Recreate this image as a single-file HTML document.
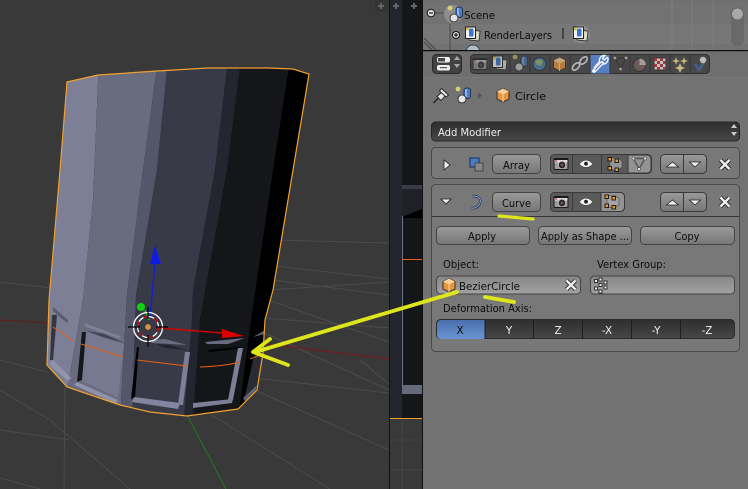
<!DOCTYPE html>
<html><head><meta charset="utf-8"><style>
html,body{margin:0;padding:0;background:#393939;width:748px;height:489px;overflow:hidden}
svg{display:block}
text{font-family:"DejaVu Sans","Liberation Sans",sans-serif;font-size:10.4px;fill:#0c0c0c}
</style></head><body>
<svg width="748" height="489" viewBox="0 0 748 489" xmlns="http://www.w3.org/2000/svg">
<defs>
<linearGradient id="btn" x1="0" y1="0" x2="0" y2="1"><stop offset="0" stop-color="#9a9a9a"/><stop offset="1" stop-color="#767676"/></linearGradient>
<linearGradient id="field" x1="0" y1="0" x2="0" y2="1"><stop offset="0" stop-color="#868686"/><stop offset="1" stop-color="#a2a2a2"/></linearGradient>
<linearGradient id="drk" x1="0" y1="0" x2="0" y2="1"><stop offset="0" stop-color="#2e2e2e"/><stop offset="1" stop-color="#474747"/></linearGradient>
<linearGradient id="blue" x1="0" y1="0" x2="0" y2="1"><stop offset="0" stop-color="#4a70ac"/><stop offset="1" stop-color="#6a94d4"/></linearGradient>
<clipPath id="mesh"><path d="M67,82 L98,75 L157,71 L208,68 L268,68 L293,69 L309,74 L273,290 L265,320 L263,353 L257,390 L238,409 L187,416 L150,412 L120,405 L67,387 L47,365 L49,300 L60,170 Z"/></clipPath>
<g id="cube"><path d="M0,-6.500 L6,-3.500 V4 L0,7 L-6,4 V-3.500 Z" fill="#e8963c" stroke="#3a3026" stroke-width="1"/><path d="M-6,-3.500 L0,-.5 L6,-3.500 L0,-6.500 Z" fill="#f8cf98"/><path d="M0,-.5 V7" stroke="#f8d8a8" stroke-width="1"/></g>
<g id="scene"><rect x="1" y="-7" width="6.500" height="10.500" rx="2.500" fill="#4a7cc8" stroke="#16243c" stroke-width=".8"/><rect x="2" y="-6" width="2" height="8" fill="#8fb4e8"/><circle cx="-1" cy="4" r="4" fill="#e4e4e4" stroke="#222" stroke-width=".8"/><circle cx="-5" cy="-6" r="2.400" fill="#d8d070"/></g>
<g id="layers"><path d="M-2,-4 L8,-3 L7,7 L-3,6 Z" fill="#d8d8c4" stroke="#333" stroke-width=".9"/><rect x="-6.500" y="-7" width="10" height="11.500" fill="#f2f2f2" stroke="#222"/><rect x="-3" y="-5.500" width="4.500" height="8" rx="1" fill="#3c74c8"/><circle cx="-4.500" cy="-5" r="1.500" fill="#d8c040"/></g>
<g id="cam"><rect x="-7.500" y="-6" width="15" height="12" rx="1" fill="#1a1a1a"/><rect x="-6.500" y="-4" width="13" height="9" fill="#d8d8d8"/><rect x="-6.500" y="-1.500" width="13" height="6.500" fill="#9a9a9a"/><circle cx="1" cy="1" r="3.800" fill="#2a2a2a" stroke="#ddd" stroke-width=".7"/><circle cx="1" cy="1" r="1.400" fill="#7a5050"/><circle cx="-5" cy="-3" r=".9" fill="#e03030"/></g>
<g id="eye"><path d="M-6.500,0 C-3,-5 3,-5 6.500,0 C3,4.500 -3,4.500 -6.500,0 Z" fill="#f4f4f4" stroke="#333" stroke-width=".5"/><circle cx="0" cy="-.3" r="1.900" fill="#222"/></g>
<g id="edit"><path d="M-5,-6 L3,-6 L7,-3 L7,3 L2,7 L-5,5 Z" fill="#a8a8a8" opacity=".75"/><path d="M-5,-6 L3,-6 L7,-3 L7,3 L2,7 L-5,5 Z" fill="none" stroke="#444" stroke-width=".6"/><g fill="#e89a28" stroke="#111" stroke-width=".9"><rect x="-7" y="-6.500" width="3.500" height="3.500"/><rect x="0" y="-5" width="3.500" height="3.500"/><rect x="-7" y="2.500" width="3.500" height="3.500"/><rect x="0" y="4" width="3.500" height="3.500"/></g></g>
<g id="vmesh"><path d="M-5.500,-4.500 H6 L0,6 Z" fill="none" stroke="#555" stroke-width="1.400"/><g fill="#e4e4e4" stroke="#333" stroke-width=".5"><circle cx="-5.500" cy="-4.500" r="1.500"/><circle cx="6" cy="-4.500" r="1.500"/><circle cx="0" cy="6" r="1.500"/></g></g>
<g id="xic"><path d="M-4.500,-4.500 L4.500,4.500 M4.500,-4.500 L-4.500,4.500" stroke="#222" stroke-width="4.200"/><path d="M-4.500,-4.500 L4.500,4.500 M4.500,-4.500 L-4.500,4.500" stroke="#f0f0f0" stroke-width="2.400"/></g>
<g id="updown"><rect x="0" y="0" width="46" height="19" rx="4" fill="url(#btn)" stroke="#3a3a3a"/><path d="M23,0 V19" stroke="#3a3a3a"/><path d="M6,12.500 L12,7.500 L18,12.500 Z" fill="#f0f0f0" stroke="#222" stroke-width=".8"/><path d="M29,7.500 H40 L34.500,12.500 Z" fill="#f0f0f0" stroke="#222" stroke-width=".8"/></g>
</defs>

<!-- viewport -->
<rect width="390" height="489" fill="#393939"/>
<g stroke="#4b4b4b" stroke-width="1" fill="none">
<path d="M0,282 L60,289"/><path d="M0,390 L50,420 L130,489"/>
<path d="M0,430 L70,440"/><path d="M65,385 L64,489"/><path d="M0,478 L40,489"/>
<path d="M262,332 L389,390"/><path d="M268,300 L389,342"/><path d="M264,318 L389,328"/>
<path d="M274,240 L389,243"/><path d="M268,290 L389,282"/><path d="M255,390 L389,450"/><path d="M255,378 L389,393"/>
<path d="M275,266 L389,279"/><path d="M272,280 L389,295"/><path d="M360,360 L389,384"/><path d="M212,415 L330,489"/>
<path d="M0,360 L47,372"/>
</g>
<path d="M0,320 L50,323" stroke="#6b1a1a"/>
<path d="M258,343 L389,359" stroke="#7a1818"/>
<path d="M187,415 L226,489" stroke="#1f7a1f"/>

<!-- right strip of viewport -->
<rect x="389" width="1" height="489" fill="#111"/>
<rect x="390" width="12" height="418" fill="#23262c"/>
<rect x="402" width="20" height="418" fill="#15161a"/>
<rect x="402" y="185" width="20" height="32" fill="#202126"/>
<path d="M402,217 L422,209 V218 H402 Z" fill="#000"/>
<rect x="402" y="185" width="20" height="4" fill="#3a3d48"/>
<rect x="402" y="216" width="1" height="169" fill="#6f7280"/>
<rect x="402" y="385" width="20" height="9" fill="#666a7c"/>
<rect x="402" y="259" width="20" height="1" fill="#e85f10"/>
<rect x="390" y="418" width="32" height="1" fill="#f0a030"/>
<path d="M390,440 H422 M402,419 V489 M390,470 H422" stroke="#444"/>
<rect x="422" width="1" height="489" fill="#111"/>
<rect x="375" width="14" height="12" fill="#343434"/>
<g stroke="#666" stroke-width="2"><path d="M378,6 H384 M381,3 V9"/><path d="M393,6 H399 M396,3 V9"/><path d="M411,6 H417 M414,3 V9"/></g>

<!-- mesh -->
<g clip-path="url(#mesh)">
<rect x="40" y="60" width="280" height="360" fill="#000"/>
<path d="M40,60 H99 L93,200 L83,300 L68,385 L60,420 H40 Z" fill="#7c7f96"/>
<path d="M99,60 H158 L143,170 L127,295 L120,420 H60 L68,385 L83,300 L93,200 Z" fill="#696c7f"/>
<path d="M158,60 H168 L157,170 L136,295 L132,420 H120 L127,295 L143,170 Z" fill="#54576a"/>
<path d="M168,60 H228 L215,170 L193,290 L192,320 L184,420 H132 L136,295 L157,170 Z" fill="#383b47"/>
<path d="M228,60 H241 L227,170 L200,320 L193,420 H184 L192,320 L193,290 L215,170 Z" fill="#23262e"/>
<path d="M241,60 H290 L273,170 L251,320 L238,420 H193 L200,320 L227,170 Z" fill="#15161a"/>
<!-- left window -->
<path d="M53,307 L68,320 L67,323 L53,311 Z" fill="#5a5d70"/>
<path d="M52,315 L57,315 L53,360 L50,360 Z" fill="#34363f"/>
<path d="M53,360 L71,378 L68,381 L49,364 Z" fill="#9295aa"/>
<!-- window 2 -->
<path d="M84,323 L120,336 L121,339 L86,327 Z" fill="#7f8296"/>
<path d="M87,331 L104,334 L124,343 L103,337 Z" fill="#3f4150"/>
<path d="M86,332 L124,344 L118,398 L82,381 Z" fill="#767990"/>
<path d="M82,332 L86,332 L82,380 L77,382 Z" fill="#16171c"/>
<path d="M77,382 L118,400 L116,404 L74,385 Z" fill="#8f92a8"/>
<!-- window 3 -->
<path d="M137,347 L139,347 L135,397 L131,399 Z" fill="#000"/>
<path d="M134,397 L180,403 L178,409 L132,402 Z" fill="#8285a0"/>
<path d="M185,352 L190,352 L183,405 L178,405 Z" fill="#7c7f96"/>
<path d="M152,340 L165,339 L187,345 L170,344 L152,343 Z" fill="#696c80"/>
<path d="M156,344 L170,345 L187,350 L165,348 Z" fill="#22242c"/>
<!-- window 4 -->
<path d="M205,342 L245,338 L228,344 L207,344 Z" fill="#696c80"/>
<path d="M207,350 L240,347 L243,348 L210,352 Z" fill="#000"/>
<path d="M238,348 L243,348 L233,400 L228,400 Z" fill="#7c7f96"/>
<path d="M193,403 L233,399 L232,403 L193,408 Z" fill="#7c7f96"/>
<!-- right -->
<path d="M253,337 L265,330 L265,334 Z" fill="#55586a"/>
<path d="M253,360 L260,345 L265,345 L257,385 L245,396 Z" fill="#2a2c33"/>
<path d="M243,398 L257,385 L256,390 L245,401 Z" fill="#5e6174"/>
</g>
<path d="M67,82 L98,75 L157,71 L208,68 L268,68 L293,69 L309,74 L273,290 L265,320 L263,353 L257,390 L238,409 L187,416 L150,412 L120,405 L67,387 L47,365 L49,300 L60,170 Z" fill="none" stroke="#f0a030" stroke-width="1.200"/>
<g stroke="#e8600f" stroke-width="1" fill="none">
<path d="M53,327 L73,341"/><path d="M81,344 L123,357"/><path d="M137,360 L187,366"/><path d="M200,367 Q225,366 240,362"/><path d="M250,359 L260,355"/>
</g>

<!-- gizmo -->
<path d="M155,262 L150,318" stroke="#1020d0" stroke-width="1.500"/>
<path d="M155,245 L161,264 L150,264 Z" fill="#0c1ce0"/>
<path d="M145,310 L149,320" stroke="#20c020" stroke-width="1.500"/>
<circle cx="141" cy="307" r="4" fill="#10d010"/>
<path d="M160,328 L222,333" stroke="#d00000" stroke-width="1.500"/>
<path d="M222,329 L244,336 L222,338 Z" fill="#dd0000"/>
<circle cx="148" cy="327" r="14.500" fill="none" stroke="#fff" stroke-width="1.300"/>
<circle cx="148" cy="327" r="10.500" fill="none" stroke="#e00000" stroke-width="1.200" stroke-dasharray="6 5"/>
<circle cx="148" cy="327" r="10.500" fill="none" stroke="#fff" stroke-width="1.200" stroke-dasharray="6 5" stroke-dashoffset="5.500"/>
<path d="M128,327 H140 M156,327 H168 M148,307 V319 M148,335 V347" stroke="#000" stroke-width="1.200"/>
<circle cx="148" cy="327" r="3.300" fill="#d09050" stroke="#3a2a1a" stroke-width=".7"/>

<!-- outliner -->
<rect x="423" width="325" height="50" fill="#727272"/>
<rect x="423" y="24" width="325" height="20" fill="#777"/>
<rect x="423" y="0" width="325" height="3" fill="#707070"/>
<path d="M672,0 V50 M692,0 V50 M713,0 V50" stroke="#7e7e7e"/>
<path d="M431,13 H446 M450,24 V50" stroke="#4a4a4a"/>
<rect x="731" y="8" width="13" height="38" rx="6.500" fill="#696969"/>
<circle cx="737.500" cy="14" r="6" fill="#a8a8a8" stroke="#666"/>
<circle cx="431" cy="13" r="3.800" fill="#ddd" stroke="#111"/><path d="M429,13 H433" stroke="#000"/>
<circle cx="456" cy="35" r="3.500" fill="#ddd" stroke="#111"/><path d="M454,35 H458 M456,33 V37" stroke="#000"/>
<circle cx="453" cy="14" r="9" fill="#8d8d8d"/>
<use href="#scene" x="455" y="14"/>
<text x="464" y="19" textLength="31" lengthAdjust="spacingAndGlyphs">Scene</text>
<use href="#layers" x="472" y="34"/>
<text x="484" y="39" textLength="68" lengthAdjust="spacingAndGlyphs">RenderLayers</text>
<path d="M563,28 V39" stroke="#444" stroke-width="2"/>
<circle cx="581" cy="34" r="9" fill="#8d8d8d"/>
<use href="#layers" x="580" y="34"/>
<circle cx="473" cy="52" r="7" fill="#b0c0c8" stroke="#444"/>
<path d="M424,38 L436,50 M424,42 L432,50" stroke="#444"/>
<path d="M738,50 L748,58 M742,50 L748,55" stroke="#444"/>

<!-- properties -->
<rect x="423" y="51" width="325" height="438" fill="#727272"/>
<rect x="423" y="51" width="325" height="26" fill="#6f6f6f"/>
<rect x="423" y="50" width="325" height="1.200" fill="#0c0c0c"/>
<rect x="423" y="77" width="325" height="1" fill="#787878"/>
<!-- header widgets -->
<rect x="432.500" y="54.500" width="29" height="19" rx="4" fill="#424242" stroke="#2a2a2a"/>
<rect x="437" y="57" width="13" height="5.500" rx="2" fill="#eee"/><rect x="437" y="65" width="13" height="5.500" rx="2" fill="#eee"/>
<path d="M438,58 H445 V61.500 H438 Z" fill="#444"/><path d="M440,67.700 H447" stroke="#333"/>
<path d="M454,60 L457,56 L460,60 Z M454,64 H460 L457,68 Z" fill="#a8a8a8"/>
<rect x="470.500" y="54.500" width="239" height="19" rx="4" fill="#484848" stroke="#2f2f2f"/>
<rect x="590" y="55" width="20" height="18.500" fill="#5680c2"/>
<path d="M490,55 V74 M510,55 V74 M530,55 V74 M550,55 V74 M570,55 V74 M590,55 V74 M610,55 V74 M630,55 V74 M650,55 V74 M670,55 V74 M690,55 V74" stroke="#333"/>
<g opacity=".55"><use href="#cam" x="480" y="64"/></g>
<g opacity=".7"><use href="#layers" x="499" y="63"/></g>
<g opacity=".55"><use href="#scene" x="520" y="63"/></g>
<circle cx="539.500" cy="64" r="6.500" fill="#47708c" stroke="#333"/><path d="M535,61 Q539,58 543,61 L541,66 L537,65 Z" fill="#7f8f60"/>
<g opacity=".7"><use href="#cube" x="559.500" y="64"/></g>
<g fill="none" stroke="#b8b8b8" stroke-width="1.600"><ellipse cx="576" cy="66.500" rx="4.500" ry="2.600" transform="rotate(-45 576 66.500)"/><ellipse cx="583.500" cy="60.500" rx="4.500" ry="2.600" transform="rotate(-45 583.500 60.500)"/></g>
<path d="M594,71 L602,63" stroke="#f2f6ff" stroke-width="3.800" stroke-linecap="round"/>
<path d="M607.500,57 L604.500,60 L602.500,58.500 L605,55.500 A5,5 0 0 0 599.500,61.500 L594,68 M607.500,57 A5,5 0 0 1 602,64" fill="none" stroke="#f2f6ff" stroke-width="1.400"/>
<path d="M595,70 L602,63" stroke="#5680c2" stroke-width="1.200"/>
<g opacity=".75"><path d="M615,58 H626 L620.500,69 Z" fill="none" stroke="#333" stroke-width="1.400"/><g fill="#bbb"><circle cx="615" cy="58" r="1.400"/><circle cx="626" cy="58" r="1.400"/><circle cx="620.500" cy="69" r="1.400"/></g></g>
<circle cx="639.500" cy="65" r="6.500" fill="#6a5a5a" stroke="#333"/><path d="M639.500,58.500 A6.500,6.500 0 0 1 646,65 H639.500 Z" fill="#a89c9c"/>
<rect x="654" y="58" width="12" height="12" fill="#c8c0c0" stroke="#333"/><path d="M654,58 h3 v3 h-3 Z M660,58 h3 v3 h-3 Z M657,61 h3 v3 h-3 Z M663,61 h3 v3 h-3 Z M654,64 h3 v3 h-3 Z M660,64 h3 v3 h-3 Z M657,67 h3 v3 h-3 Z M663,67 h3 v3 h-3 Z" fill="#9a3a3a"/>
<g fill="#c8b880"><path d="M676,57 L677,60 L680,61 L677,62 L676,65 L675,62 L672,61 L675,60 Z"/><path d="M684,57 L685,60 L688,61 L685,62 L684,65 L683,62 L680,61 L683,60 Z"/><path d="M680,63 L681.500,66.500 L685,68 L681.500,69.500 L680,73 L678.500,69.500 L675,68 L678.500,66.500 Z"/></g>
<path d="M695,64 L699,70 L704,62" fill="none" stroke="#44608c" stroke-width="2.600"/><circle cx="703" cy="60" r="3.200" fill="#bcbcbc"/>

<!-- breadcrumb -->
<g fill="#e4e4e4" stroke="#222" stroke-width=".9"><path d="M438,98.500 L433.500,103" stroke-width="1.400"/><path d="M442,92 L445.500,95.500 L441,100.500 L437,96.500 Z"/><path d="M441.500,88.500 L448.500,95 L446,97 L439.500,91 Z"/></g>
<use href="#scene" x="463" y="95"/>
<path d="M478,92 L482,95.500 L478,99 Z" fill="#555"/>
<use href="#cube" x="503" y="95"/>
<text x="515" y="100" textLength="31" lengthAdjust="spacingAndGlyphs">Circle</text>

<!-- add modifier -->
<rect x="431.500" y="122" width="308" height="19" rx="4" fill="url(#drk)" stroke="#252525"/>
<text x="438" y="136" style="fill:#f0f0f0" textLength="63" lengthAdjust="spacingAndGlyphs">Add Modifier</text>
<path d="M731,128 L734,124 L737,128 Z M731,132 H737 L734,136 Z" fill="#c8c8c8"/>

<!-- Array box -->
<rect x="431.500" y="147.500" width="308" height="31" rx="4" fill="#787878" stroke="#4a4a4a"/>
<path d="M444,160 L450,165 L444,170 Z" fill="#eee" stroke="#222" stroke-width=".8"/>
<rect x="470" y="158" width="9" height="9" fill="#4a7cc8" stroke="#1a2a50"/><rect x="475" y="163" width="8" height="8" fill="#888" stroke="#444"/>
<rect x="492.500" y="154.500" width="48" height="19" rx="4" fill="url(#btn)" stroke="#444"/>
<text x="516.500" y="169" text-anchor="middle" textLength="27" lengthAdjust="spacingAndGlyphs">Array</text>
<rect x="550.500" y="154.500" width="101" height="19" rx="4" fill="#5a5a5a" stroke="#3a3a3a"/>
<path d="M572.500,155 V174 M601.500,155 V174" stroke="#3a3a3a"/>
<path d="M628,155 H647 A4,4 0 0 1 651,159 V169 A4,4 0 0 1 647,173 H628 Z" fill="#939393" stroke="#3a3a3a"/>
<use href="#cam" x="561" y="164"/><use href="#eye" x="586" y="164"/><use href="#edit" x="615" y="164"/><use href="#vmesh" x="639" y="163"/>
<use href="#updown" x="660.500" y="154.500"/>
<use href="#xic" x="725" y="164.500"/>

<!-- Curve box -->
<rect x="431.500" y="184.500" width="308" height="167" rx="4" fill="#787878" stroke="#4a4a4a"/>
<path d="M432,216.500 H739" stroke="#383838"/>
<path d="M441,199 L451,199 L446,204 Z" fill="#eee" stroke="#222" stroke-width=".8"/>
<path d="M472,196 Q482,196 480,203 Q478,209 471,208" fill="none" stroke="#1d2c48" stroke-width="2.400"/>
<path d="M472,196 Q482,196 480,203 Q478,209 471,208" fill="none" stroke="#8db0dc" stroke-width="1"/>
<rect x="492.500" y="192.500" width="48" height="19" rx="4" fill="url(#btn)" stroke="#444"/>
<text x="516.500" y="207" text-anchor="middle" textLength="29" lengthAdjust="spacingAndGlyphs">Curve</text>
<path d="M550.500,197 A4,4 0 0 1 554.500,192.500 H620 A4,4 0 0 1 624.500,197 V207 A4,4 0 0 1 620,211.500 H554.500 A4,4 0 0 1 550.500,207 Z" fill="#5a5a5a" stroke="#3a3a3a"/>
<path d="M601,193 H620 A4,4 0 0 1 624,197 V207 A4,4 0 0 1 620,211 H601 Z" fill="#939393"/>
<path d="M572.500,193 V211 M601,193 V211" stroke="#3a3a3a"/>
<use href="#cam" x="561" y="202"/><use href="#eye" x="586" y="202"/><use href="#edit" x="612" y="201.500"/>
<use href="#updown" x="660.500" y="192.500"/>
<use href="#xic" x="725" y="202"/>

<rect x="436.500" y="226.500" width="93" height="18" rx="4" fill="url(#btn)" stroke="#444"/>
<text x="482" y="240" text-anchor="middle" textLength="28" lengthAdjust="spacingAndGlyphs">Apply</text>
<rect x="538.500" y="226.500" width="93" height="18" rx="4" fill="url(#btn)" stroke="#444"/>
<text x="541" y="240" textLength="88" lengthAdjust="spacingAndGlyphs">Apply as Shape ...</text>
<rect x="640.500" y="226.500" width="94" height="18" rx="4" fill="url(#btn)" stroke="#444"/>
<text x="687" y="240" text-anchor="middle" textLength="25" lengthAdjust="spacingAndGlyphs">Copy</text>

<text x="443" y="268" textLength="36" lengthAdjust="spacingAndGlyphs">Object:</text>
<text x="597" y="268" textLength="69" lengthAdjust="spacingAndGlyphs">Vertex Group:</text>
<rect x="436.500" y="276" width="144" height="18" rx="4" fill="url(#field)" stroke="#444"/>
<use href="#cube" x="449" y="285"/>
<text x="459" y="290" textLength="61" lengthAdjust="spacingAndGlyphs">BezierCircle</text>
<use href="#xic" x="571" y="285"/>
<rect x="590.500" y="276" width="144" height="18" rx="4" fill="url(#field)" stroke="#444"/>
<g fill="#eee" stroke="#111" stroke-width=".8"><rect x="594.500" y="279.500" width="3" height="3"/><rect x="599" y="278" width="3" height="3"/><rect x="604" y="281" width="3" height="3"/><rect x="594.500" y="287" width="3" height="3"/><rect x="599" y="283.500" width="3" height="3"/><rect x="604" y="286" width="3" height="3"/><rect x="599" y="290" width="3" height="3"/></g>
<text x="443" y="312" textLength="89" lengthAdjust="spacingAndGlyphs">Deformation Axis:</text>

<rect x="436.500" y="319.500" width="298" height="19" rx="4" fill="url(#drk)" stroke="#2a2a2a"/>
<path d="M485,320 V339 H441 A4,4 0 0 1 437,335 V324 A4,4 0 0 1 441,320 Z" fill="url(#blue)"/>
<path d="M485,320 V339 M533.500,320 V339 M582.500,320 V339 M631.500,320 V339 M680.500,320 V339" stroke="#1e1e1e"/>
<text x="460" y="334" text-anchor="middle">X</text>
<text x="509" y="334" text-anchor="middle" style="fill:#f0f0f0">Y</text>
<text x="558" y="334" text-anchor="middle" style="fill:#f0f0f0">Z</text>
<text x="607" y="334" text-anchor="middle" style="fill:#f0f0f0">-X</text>
<text x="656" y="334" text-anchor="middle" style="fill:#f0f0f0">-Y</text>
<text x="707" y="334" text-anchor="middle" style="fill:#f0f0f0">-Z</text>

<!-- yellow annotations -->
<g stroke="#dde61c" fill="none" stroke-linecap="round" stroke-linejoin="round">
<path d="M255,352 L457,292" stroke-width="3.800"/>
<path d="M270,339 L253,352 L288,365" stroke-width="3.800"/>
<path d="M485,297 L514,302" stroke-width="3.800"/>
<path d="M499,216 L533,219" stroke-width="3.200"/>
</g>
</svg>
</body></html>
